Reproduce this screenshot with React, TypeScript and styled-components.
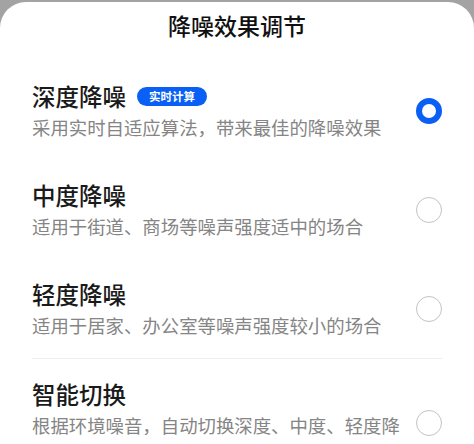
import styled, { createGlobalStyle } from "styled-components";

const GlobalStyle = createGlobalStyle`
    html, body {
        margin: 0;
        padding: 0;
        overflow: hidden;
        background: #a3a3a3;
        font-family: "Noto Sans CJK SC", "Noto Sans", sans-serif;
    }
`;

const Sheet = styled.div`
    margin-top: 2px;
    min-height: 442px;
    background: #ffffff;
    border-radius: 26px 26px 0 0;
`;

const SheetTitle = styled.h1`
    margin: 0;
    padding: 8px 0 21px 0;
    font-size: 23px;
    line-height: 30px;
    font-weight: 500;
    color: #111111;
    text-align: center;
`;

const Options = styled.ul`
    list-style: none;
    margin: 0;
    padding: 0 32px;
`;

const Divider = styled.li`
    height: 1px;
    background: #efefef;
`;

const Option = styled.li`
    display: flex;
    align-items: center;
    gap: 12px;
    padding: 20px 0 19px 0;
`;

const OptionText = styled.div`
    flex: 1;
    min-width: 0;
`;

const OptionTitle = styled.div`
    display: flex;
    align-items: center;
    gap: 11px;
    font-size: 23.5px;
    line-height: 30px;
    font-weight: 500;
    color: #1a1a1a;
`;

const Badge = styled.span`
    display: inline-flex;
    align-items: center;
    height: 19px;
    padding: 0 12px;
    border-radius: 10px;
    background: #0a5ff5;
    color: #ffffff;
    font-size: 11.5px;
    font-weight: 700;
`;

const OptionDesc = styled.p`
    margin: 2px 0 0 0;
    font-size: 18.4px;
    line-height: 28px;
    color: #858585;
`;

const Radio = styled.span<{ $checked?: boolean }>`
    flex: none;
    box-sizing: border-box;
    width: 26px;
    height: 26px;
    border-radius: 50%;
    border: ${(p) => (p.$checked ? "6px solid #0a5ff5" : "1.5px solid #c3c3c3")};
`;

const options = [
    { title: "深度降噪", badge: "实时计算", desc: "采用实时自适应算法，带来最佳的降噪效果", checked: true },
    { title: "中度降噪", desc: "适用于街道、商场等噪声强度适中的场合" },
    { title: "轻度降噪", desc: "适用于居家、办公室等噪声强度较小的场合" },
    { title: "智能切换", desc: "根据环境噪音，自动切换深度、中度、轻度降噪模式", divided: true },
];

export default function App() {
    return (
        <>
            <GlobalStyle />
            <Sheet>
                <SheetTitle>降噪效果调节</SheetTitle>
                <Options>
                    {options.map((o) => [
                        o.divided ? <Divider key={o.title + "-d"} /> : null,
                        <Option key={o.title}>
                            <OptionText>
                                <OptionTitle>
                                    {o.title}
                                    {o.badge && <Badge>{o.badge}</Badge>}
                                </OptionTitle>
                                <OptionDesc>{o.desc}</OptionDesc>
                            </OptionText>
                            <Radio $checked={o.checked} />
                        </Option>,
                    ])}
                </Options>
            </Sheet>
        </>
    );
}
